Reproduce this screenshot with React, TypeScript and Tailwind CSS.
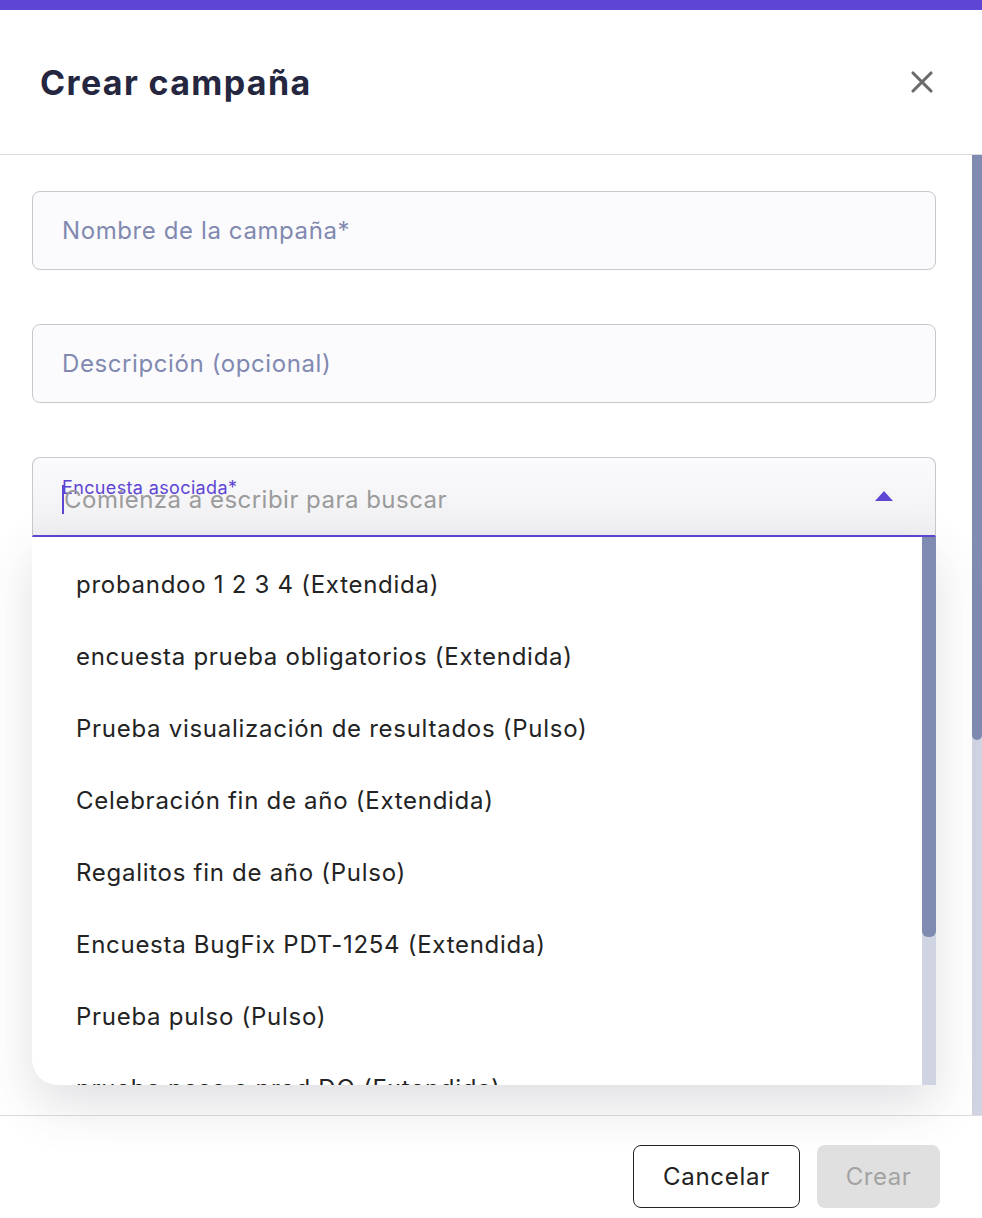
import { X } from "lucide-react"

const surveys = [
    "probandoo 1 2 3 4 (Extendida)",
    "encuesta prueba obligatorios (Extendida)",
    "Prueba visualización de resultados (Pulso)",
    "Celebración fin de año (Extendida)",
    "Regalitos fin de año (Pulso)",
    "Encuesta BugFix PDT-1254 (Extendida)",
    "Prueba pulso (Pulso)",
    "prueba paso a prod DO (Extendida)",
]

function TextField({ placeholder }: { placeholder: string }) {
    return (
        <div className="flex h-[79px] items-center rounded-lg border border-[#c8c8cc] bg-[#fbfbfd] px-[29px]">
            <span className="text-[24px] tracking-[0.025em] text-[#8189b0]">{placeholder}</span>
        </div>
    )
}

function SurveySelect() {
    return (
        <div className="relative">
            <div className="relative flex h-[80px] items-center rounded-t-lg border border-b-2 border-[#c8c8cc] border-b-[#5e45d4] bg-gradient-to-b from-[#fbfbfd] to-[#f0f0f3] pl-[29px] pr-[42px]">
                <div className="flex flex-1 flex-col">
                    <span className="text-[18px] leading-[18px] tracking-[0.02em] text-[#5e45d4]">
                        Encuesta asociada*
                    </span>
                    <div className="mt-[-12px] flex items-center">
                        <span className="h-[29px] w-[2px] bg-[#5e45d4]" />
                        <span className="text-[24px] leading-[28px] tracking-[0.02em] text-[#9b9b9b]">
                            Comienza a escribir para buscar
                        </span>
                    </div>
                </div>
                <svg width="18" height="10" viewBox="0 0 18 10" className="mt-[-2px]">
                    <path d="M9 0 L18 10 L0 10 Z" fill="#5e45d4" />
                </svg>
            </div>
            <div className="absolute left-0 right-0 top-full z-10 flex h-[548px] overflow-hidden rounded-bl-[26px] bg-white shadow-[0_20px_50px_rgba(60,60,80,0.16)]">
                <ul className="flex flex-1 flex-col pt-[12px]">
                    {surveys.map((s) => (
                        <li
                            key={s}
                            className="flex h-[72px] shrink-0 items-center pl-[44px] text-[24px] tracking-[0.03em] text-[#232323]"
                        >
                            {s}
                        </li>
                    ))}
                </ul>
                <div className="flex w-[14px] flex-col bg-[#d0d4e2]">
                    <div className="h-[400px] rounded-b-md bg-[#7f8bb0]" />
                </div>
            </div>
        </div>
    )
}

export default function App() {
    return (
        <main className="flex h-[1218px] w-[982px] flex-col overflow-hidden bg-white font-['Inter','Noto_Sans',sans-serif]">
            <div className="h-[10px] bg-[#5e45d4]" />
            <header className="flex h-[145px] items-center justify-between border-b border-[#dcdcde] pl-[40px] pr-[42px]">
                <h1 className="text-[34px] font-bold tracking-[0.04em] text-[#252640]">Crear campaña</h1>
                <X size={36} strokeWidth={2.1} className="text-[#6b6b6b]" />
            </header>
            <section className="flex h-[960px]">
                <div className="flex flex-1 flex-col gap-[54px] pl-[32px] pr-[36px] pt-[36px]">
                    <TextField placeholder="Nombre de la campaña*" />
                    <TextField placeholder="Descripción (opcional)" />
                    <SurveySelect />
                </div>
                <div className="flex w-[10px] flex-col bg-[#d0d4e2]">
                    <div className="h-[585px] rounded-b-md bg-[#7f8bb0]" />
                </div>
            </section>
            <footer className="flex flex-1 items-start justify-end gap-[17px] border-t border-[#dcdcde] pr-[42px] pt-[29px]">
                <button className="h-[63px] w-[167px] rounded-lg border border-[#222] bg-white text-[24px] tracking-[0.03em] text-[#222]">
                    Cancelar
                </button>
                <button className="h-[63px] w-[123px] rounded-lg bg-[#e0e0e0] text-[24px] tracking-[0.02em] text-[#a3a3a3]">
                    Crear
                </button>
            </footer>
        </main>
    )
}
